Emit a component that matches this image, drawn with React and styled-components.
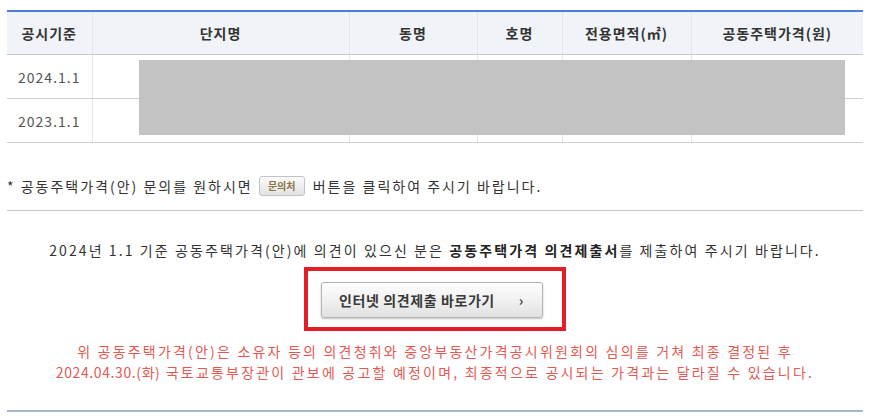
import React from 'react'
import styled, { createGlobalStyle } from 'styled-components'

const GlobalStyle = createGlobalStyle`
  body {
    margin: 0;
    background: #fff;
    font-family: "Noto Sans CJK KR", "Noto Sans", sans-serif;
    color: #333;
  }
`

const Page = styled.div`
  width: 856px;
  margin-left: 7px;
  padding-top: 10px;
`

const TableWrap = styled.div`
  position: relative;
`

const Table = styled.table`
  width: 100%;
  border-collapse: collapse;
  table-layout: fixed;
  border-top: 2px solid #4a7fd2;
  font-size: 14px;
  letter-spacing: 1px;
`

const Th = styled.th`
  height: 42px;
  padding: 0;
  background: #f0f3f8;
  color: #333;
  font-weight: 700;
  border-bottom: 1px solid #c9c9c9;
  border-left: 1px solid #e3e6ea;
  &:first-child {
    border-left: none;
  }
`

const Td = styled.td`
  height: 43px;
  padding: 0;
  text-align: center;
  color: #555;
  border-bottom: 1px solid #cfcfcf;
  border-left: 1px solid #e6e6e6;
  &:first-child {
    border-left: none;
  }
`

const Redaction = styled.div`
  position: absolute;
  left: 132px;
  top: 50px;
  width: 706px;
  height: 75px;
  background: #c3c3c3;
`

const Note = styled.p`
  margin: 33px 0 0;
  font-size: 14px;
  line-height: 20px;
  letter-spacing: 2px;
  color: #333;
  display: flex;
  align-items: center;
  white-space: nowrap;
`

const SmallButton = styled.span`
  display: inline-flex;
  align-items: center;
  justify-content: center;
  width: 46px;
  height: 20px;
  margin: 0 8px 0 6px;
  box-sizing: border-box;
  border: 1px solid #c2c2c2;
  border-radius: 3px;
  background: linear-gradient(#fbfbfb, #e2e2e2);
  font-size: 10px;
  font-weight: 700;
  letter-spacing: 0;
  color: #8a7444;
`

const Divider = styled.hr`
  margin: 14px 0 0;
  border: none;
  border-top: 1px solid #c6c6c6;
`

const Notice = styled.p`
  margin: 29px 0 0;
  text-align: center;
  font-size: 14px;
  line-height: 20px;
  letter-spacing: 2.1px;
  color: #333;
  strong {
    font-weight: 700;
    color: #222;
  }
`

const HighlightBox = styled.div`
  width: 262px;
  height: 64px;
  margin: 7px auto 0;
  box-sizing: border-box;
  border: 4px solid #e31e26;
  padding: 11px 0 0 13px;
`

const GoButton = styled.a`
  display: flex;
  align-items: center;
  justify-content: space-between;
  width: 222px;
  height: 36px;
  box-sizing: border-box;
  padding: 0 18px 0 17px;
  border: 1px solid #b3b3b3;
  border-radius: 3px;
  background: linear-gradient(#fefefe 0%, #f1f1f1 50%, #e1e1e1 100%);
  box-shadow: 0 1px 2px rgba(0, 0, 0, 0.25);
  font-size: 14px;
  font-weight: 700;
  letter-spacing: 0.6px;
  color: #3a3a3a;
  text-decoration: none;
  cursor: pointer;
`

const Arrow = styled.span`
  font-size: 14px;
  font-weight: 700;
  color: #444;
`

const Warning = styled.p`
  margin: 10px 0 0;
  text-align: center;
  font-size: 14px;
  line-height: 21px;
  letter-spacing: 2.2px;
  color: #e45a52;
`

const DateText = styled.span`
  letter-spacing: 0.6px;
`

const BottomRule = styled.div`
  margin-top: 27px;
  height: 2px;
  background: #a7b5d0;
`

const columns = [
  { title: '공시기준', width: 85 },
  { title: '단지명', width: 257 },
  { title: '동명', width: 128 },
  { title: '호명', width: 85 },
  { title: '전용면적(㎡)', width: 129 },
  { title: '공동주택가격(원)', width: 172 },
]

const rows = ['2024.1.1', '2023.1.1']

function App() {
  return (
    <>
      <GlobalStyle />
      <Page>
        <TableWrap>
          <Table>
            <colgroup>
              {columns.map((col) => (
                <col key={col.title} style={{ width: col.width }} />
              ))}
            </colgroup>
            <thead>
              <tr>
                {columns.map((col) => (
                  <Th key={col.title}>{col.title}</Th>
                ))}
              </tr>
            </thead>
            <tbody>
              {rows.map((date) => (
                <tr key={date}>
                  <Td>{date}</Td>
                  <Td />
                  <Td />
                  <Td />
                  <Td />
                  <Td />
                </tr>
              ))}
            </tbody>
          </Table>
          <Redaction />
        </TableWrap>

        <Note>
          * 공동주택가격(안) 문의를 원하시면<SmallButton>문의처</SmallButton>버튼을 클릭하여 주시기 바랍니다.
        </Note>

        <Divider />

        <Notice>
          2024년 1.1 기준 공동주택가격(안)에 의견이 있으신 분은 <strong>공동주택가격 의견제출서</strong>를 제출하여 주시기 바랍니다.
        </Notice>

        <HighlightBox>
          <GoButton>
            <span>인터넷 의견제출 바로가기</span>
            <Arrow>›</Arrow>
          </GoButton>
        </HighlightBox>

        <Warning>
          위 공동주택가격(안)은 소유자 등의 의견청취와 중앙부동산가격공시위원회의 심의를 거쳐 최종 결정된 후
          <br />
          <DateText>2024.04.30.(화)</DateText> 국토교통부장관이 관보에 공고할 예정이며, 최종적으로 공시되는 가격과는 달라질 수 있습니다.
        </Warning>

        <BottomRule />
      </Page>
    </>
  )
}

export default App
